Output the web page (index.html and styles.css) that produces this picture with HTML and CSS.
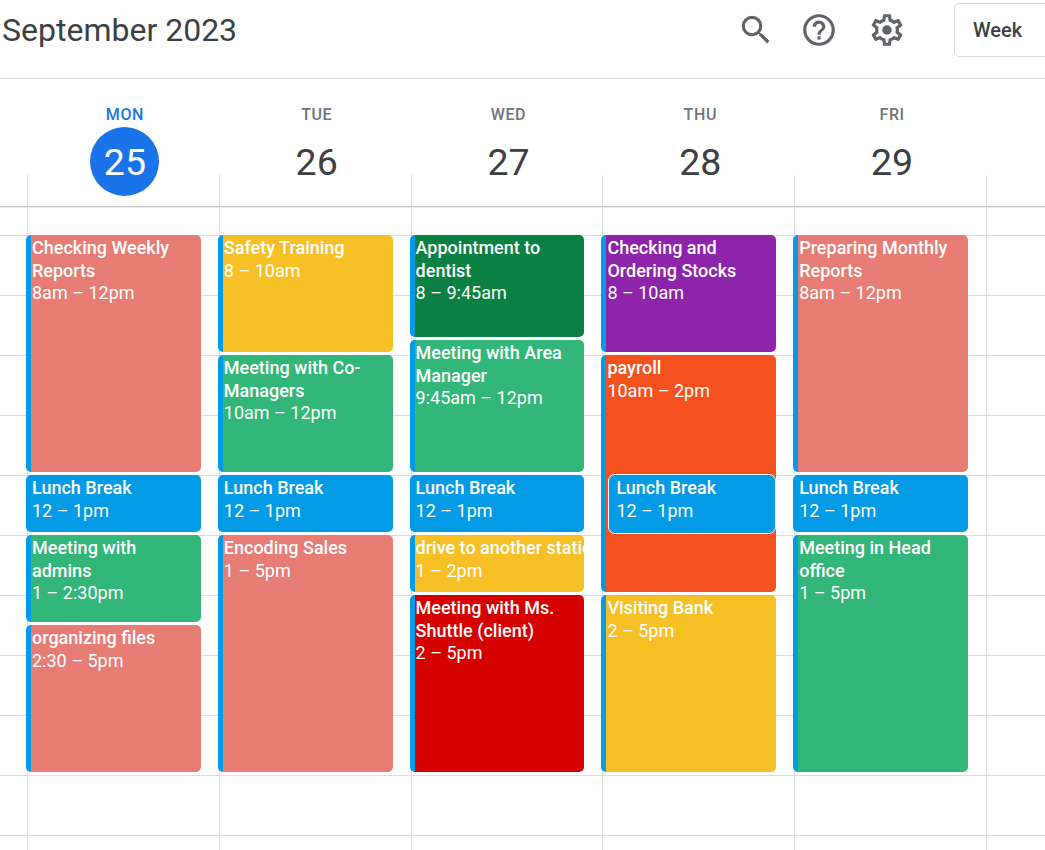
FILE: index.html
```html
<!DOCTYPE html>
<html lang="en">
<head>
<meta charset="utf-8">
<title>September 2023</title>
<link rel="stylesheet" href="styles.css">
</head>
<body>
<div class="app">
  <header class="topbar">
    <h1 class="title">September 2023</h1>
    <div class="tools">
      <svg class="icon icon-search" viewBox="0 0 24 24"><path d="M15.5 14h-.79l-.28-.27A6.471 6.471 0 0 0 16 9.5 6.5 6.5 0 1 0 9.5 16c1.61 0 3.09-.59 4.23-1.57l.27.28v.79l5 4.99L20.49 19l-4.99-5zm-6 0C7.01 14 5 11.99 5 9.5S7.01 5 9.5 5 14 7.01 14 9.5 11.99 14 9.5 14z"/></svg>
      <svg class="icon icon-help" viewBox="0 0 24 24"><path d="M11 18h2v-2h-2v2zm1-16C6.48 2 2 6.48 2 12s4.48 10 10 10 10-4.48 10-10S17.52 2 12 2zm0 18c-4.41 0-8-3.59-8-8s3.59-8 8-8 8 3.59 8 8-3.59 8-8 8zm0-14c-2.21 0-4 1.79-4 4h2c0-1.1.9-2 2-2s2 .9 2 2c0 2-3 1.75-3 5h2c0-2.25 3-2.5 3-5 0-2.21-1.79-4-4-4z"/></svg>
      <svg class="icon icon-gear" viewBox="0 0 24 24"><path d="M19.43 12.98c.04-.32.07-.64.07-.98 0-.34-.03-.66-.07-.98l2.11-1.65c.19-.15.24-.42.12-.64l-2-3.46c-.09-.16-.26-.25-.44-.25-.06 0-.12.01-.17.03l-2.49 1c-.52-.4-1.08-.73-1.69-.98l-.38-2.65C14.46 2.18 14.25 2 14 2h-4c-.25 0-.46.18-.49.42l-.38 2.65c-.61.25-1.17.59-1.69.98l-2.49-1c-.06-.02-.12-.03-.18-.03-.17 0-.34.09-.43.25l-2 3.46c-.13.22-.07.49.12.64l2.11 1.65c-.04.32-.07.65-.07.98 0 .33.03.66.07.98l-2.11 1.65c-.19.15-.24.42-.12.64l2 3.46c.09.16.26.25.44.25.06 0 .12-.01.17-.03l2.49-1c.52.4 1.08.73 1.69.98l.38 2.65c.03.24.24.42.49.42h4c.25 0 .46-.18.49-.42l.38-2.65c.61-.25 1.17-.59 1.69-.98l2.49 1c.06.02.12.03.18.03.17 0 .34-.09.43-.25l2-3.46c.12-.22.07-.49-.12-.64l-2.11-1.65zm-1.98-1.71c.04.31.05.52.05.73 0 .21-.02.43-.05.73l-.14 1.13.89.7 1.08.84-.7 1.21-1.27-.51-1.04-.42-.9.68c-.43.32-.84.56-1.25.73l-1.06.43-.16 1.13-.2 1.35h-1.4l-.19-1.35-.16-1.13-1.06-.43c-.43-.18-.83-.41-1.23-.71l-.91-.7-1.06.43-1.27.51-.7-1.21 1.08-.84.89-.7-.14-1.13c-.03-.31-.05-.54-.05-.74s.02-.43.05-.73l.14-1.13-.89-.7-1.08-.84.7-1.21 1.27.51 1.04.42.9-.68c.43-.32.84-.56 1.25-.73l1.06-.43.16-1.13.2-1.35h1.39l.19 1.35.16 1.13 1.06.43c.43.18.83.41 1.23.71l.91.7 1.06-.43 1.27-.51.7 1.21-1.07.85-.89.7.14 1.13z"/><circle cx="12" cy="12" r="3"/></svg>
    </div>
    <button class="view-btn">Week</button>
  </header>

  <div class="day-heads">
    <div class="day-head today"><span class="dow">MON</span><span class="date">25</span></div>
    <div class="day-head"><span class="dow">TUE</span><span class="date">26</span></div>
    <div class="day-head"><span class="dow">WED</span><span class="date">27</span></div>
    <div class="day-head"><span class="dow">THU</span><span class="date">28</span></div>
    <div class="day-head"><span class="dow">FRI</span><span class="date">29</span></div>
    <div class="day-head empty"></div>
  </div>

  <main class="week">
    <section class="day">
      <article class="event salmon" style="grid-row:1/17"><strong>Checking Weekly Reports</strong><span>8am – 12pm</span></article>
      <article class="event blue" style="grid-row:17/21"><strong>Lunch Break</strong><span>12 – 1pm</span></article>
      <article class="event green" style="grid-row:21/27"><strong>Meeting with admins</strong><span>1 – 2:30pm</span></article>
      <article class="event salmon" style="grid-row:27/37"><strong>organizing files</strong><span>2:30 – 5pm</span></article>
    </section>
    <section class="day">
      <article class="event yellow" style="grid-row:1/9"><strong>Safety Training</strong><span>8 – 10am</span></article>
      <article class="event green" style="grid-row:9/17"><strong>Meeting with Co-Managers</strong><span>10am – 12pm</span></article>
      <article class="event blue" style="grid-row:17/21"><strong>Lunch Break</strong><span>12 – 1pm</span></article>
      <article class="event salmon" style="grid-row:21/37"><strong>Encoding Sales</strong><span>1 – 5pm</span></article>
    </section>
    <section class="day">
      <article class="event dark-green" style="grid-row:1/8"><strong>Appointment to dentist</strong><span>8 – 9:45am</span></article>
      <article class="event green" style="grid-row:8/17"><strong>Meeting with Area Manager</strong><span>9:45am – 12pm</span></article>
      <article class="event blue" style="grid-row:17/21"><strong>Lunch Break</strong><span>12 – 1pm</span></article>
      <article class="event yellow clip" style="grid-row:21/25"><strong>drive to another station</strong><span>1 – 2pm</span></article>
      <article class="event red" style="grid-row:25/37"><strong>Meeting with Ms. Shuttle (client)</strong><span>2 – 5pm</span></article>
    </section>
    <section class="day">
      <article class="event purple" style="grid-row:1/9"><strong>Checking and Ordering Stocks</strong><span>8 – 10am</span></article>
      <article class="event orange" style="grid-row:9/25"><strong>payroll</strong><span>10am – 2pm</span></article>
      <article class="event blue nested" style="grid-row:17/21"><strong>Lunch Break</strong><span>12 – 1pm</span></article>
      <article class="event yellow" style="grid-row:25/37"><strong>Visiting Bank</strong><span>2 – 5pm</span></article>
    </section>
    <section class="day">
      <article class="event salmon" style="grid-row:1/17"><strong>Preparing Monthly Reports</strong><span>8am – 12pm</span></article>
      <article class="event blue" style="grid-row:17/21"><strong>Lunch Break</strong><span>12 – 1pm</span></article>
      <article class="event green" style="grid-row:21/37"><strong>Meeting in Head office</strong><span>1 – 5pm</span></article>
    </section>
    <section class="day"></section>
  </main>
</div>
</body>
</html>
```
FILE: styles.css
```css
* { box-sizing: border-box; }
html, body { margin: 0; height: 100%; overflow: hidden; background: #fff; }
body { font-family: Roboto, "Liberation Sans", sans-serif; color: #3c4043; }

.app { width: 1045px; height: 850px; display: flex; flex-direction: column; overflow: hidden; }

.topbar {
  flex: none; height: 79px; display: flex; align-items: flex-start;
  border-bottom: 1px solid #dadce0; padding-left: 2px;
}
.title { margin: 10px 0 0; font-size: 32px; line-height: 40px; font-weight: 400; color: #3c4043; flex: none; width: 735px; white-space: nowrap; }
.tools { flex: none; display: flex; align-items: center; margin-top: 11px; }
.icon { width: 38px; height: 38px; fill: #5f6368; display: block; flex: none; }
.icon-help { margin-left: 25px; }
.icon-gear { margin-left: 30px; }
.view-btn {
  flex: none; width: 110px; height: 54px; margin: 3px 0 0 48px; padding: 0 0 0 18px; text-align: left;
  background: #fff; border: 1px solid #dadce0; border-radius: 5px;
  font: 500 20px/1 Roboto, sans-serif; color: #3c4043;
}

.day-heads { flex: none; display: flex; height: 128px; padding-left: 27px; border-bottom: 1px solid #c4c6c8; box-shadow: 0 1px 1px rgba(0,0,0,.08); }
.day-head {
  flex: none; width: 191.8px; padding: 27px 0 0 4px; display: flex; flex-direction: column; align-items: center;
  background: linear-gradient(#dadce0, #dadce0) left bottom / 1px 31px no-repeat;
}
.dow { font-size: 16px; line-height: 18px; font-weight: 500; letter-spacing: .6px; color: #70757a; }
.date { width: 69px; height: 69px; margin-top: 3px; border-radius: 50%; display: flex; align-items: center; justify-content: center; font-size: 37.5px; color: #3c4043; }
.today .dow { color: #1a73e8; }
.today .date { background: #1a73e8; color: #fff; }

.week {
  flex: 1; min-height: 0; display: flex; padding-left: 27px; overflow: hidden;
  background: repeating-linear-gradient(to bottom, #dadce0 0 1px, transparent 1px 60px) 0 28px;
}
.day {
  flex: none; width: 191.8px; padding-top: 28px; border-left: 1px solid #dadce0;
  display: grid; grid-template-columns: 1fr; grid-template-rows: repeat(48, 15px);
}

.event {
  grid-column: 1; margin: 0 18px 3px -2px; padding: 2px 2px 0 1px; min-width: 0; overflow: hidden;
  border-left: 5px solid #039be5; border-radius: 5px;
  color: #fff; font-size: 18px; line-height: 22.5px;
}
.event strong { display: block; font-weight: 500; }
.event span { display: block; font-weight: 400; }
.salmon { background: #e67c73; }
.yellow { background: #f6bf26; }
.green { background: #33b679; }
.dark-green { background: #0b8043; }
.purple { background: #8e24aa; }
.orange { background: #f4511e; }
.blue { background: #039be5; }
.red { background: #d50000; }
.clip strong { white-space: nowrap; overflow: hidden; margin-right: -2px; }
.event.nested { margin: -1px 18px 1px 5px; padding: 2px 0 0 7px; border: 1px solid #fff; border-radius: 7px; position: relative; }
```
